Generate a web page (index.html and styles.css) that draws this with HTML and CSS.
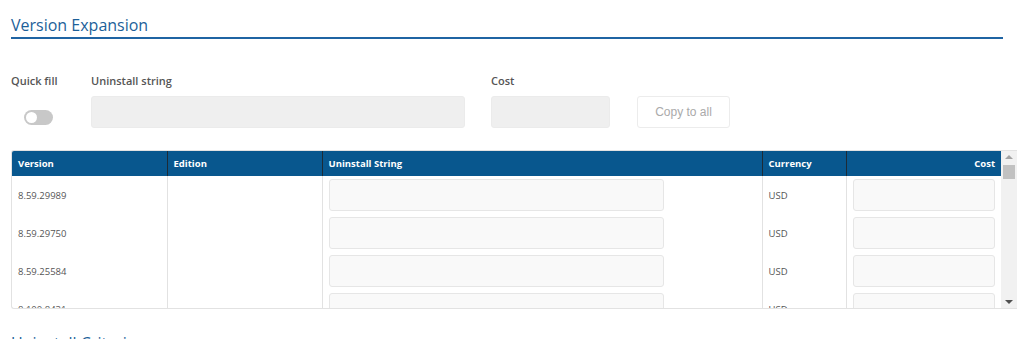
FILE: index.html
```html
<!DOCTYPE html>
<html lang="en">
<head>
  <meta charset="UTF-8">
  <meta name="viewport" content="width=device-width, initial-scale=1.0">
  <title>Version Expansion</title>
  <link rel="stylesheet" href="styles.css">
</head>
<body>

  <section class="panel">
    <h2 class="section-title">Version Expansion</h2>

    <div class="quick-fill">
      <div class="field field-toggle">
        <label>Quick fill</label>
        <span class="toggle"><span class="knob"></span></span>
      </div>
      <div class="field field-string">
        <label>Uninstall string</label>
        <input type="text" class="input-grey">
      </div>
      <div class="field field-cost">
        <label>Cost</label>
        <input type="text" class="input-grey">
      </div>
      <div class="field field-btn">
        <button class="copy-btn">Copy to all</button>
      </div>
    </div>

    <div class="table-wrap">
      <div class="table-scroll">
        <table class="versions">
          <thead>
            <tr>
              <th class="col-version">Version</th>
              <th class="col-edition">Edition</th>
              <th class="col-string">Uninstall String</th>
              <th class="col-currency">Currency</th>
              <th class="col-cost">Cost</th>
            </tr>
          </thead>
          <tbody id="versionRows"></tbody>
        </table>
      </div>
      <div class="scrollbar">
        <span class="sb-arrow up"></span>
        <span class="sb-track"><span class="sb-thumb"></span></span>
        <span class="sb-arrow down"></span>
      </div>
    </div>

    <h2 class="section-title next">Uninstall Criteria</h2>
  </section>

  <script>
    // versions found for the product
    const versions = [
      '8.59.29989', '8.59.29750', '8.59.25584', '8.100.8431', '8.100.8210',
      '8.100.7903', '8.98.7512', '8.98.7460', '8.96.7234', '8.96.7101'
    ];

    const tbody = document.getElementById('versionRows');
    versions.forEach(v => {
      const tr = document.createElement('tr');
      tr.innerHTML =
        '<td>' + v + '</td><td></td>' +
        '<td><input type="text" class="cell-input string-input"></td>' +
        '<td>USD</td>' +
        '<td><input type="text" class="cell-input cost-input"></td>';
      tbody.appendChild(tr);
    });
  </script>

</body>
</html>
```

FILE: styles.css
```css
body {
  margin: 0;
  font-family: "Open Sans", Arial, sans-serif;
  background: #fff;
  color: #555;
  overflow: hidden;
}
.panel {
  padding-left: 11px;
}
.section-title {
  margin: 14px 14px 0 0;
  font-size: 16px;
  font-weight: 400;
  line-height: 23px;
  color: #1c5f99;
  border-bottom: 2px solid #1f64a3;
}
.section-title.next {
  margin-top: 23px;
}
.quick-fill {
  display: flex;
  margin-top: 34px;
}
.field {
  display: flex;
  flex-direction: column;
}
.field label {
  font-size: 11px;
  font-weight: 600;
  line-height: 16px;
  color: #555;
  margin-bottom: 7px;
}
.field-toggle {
  width: 80px;
}
.toggle {
  position: relative;
  display: block;
  width: 29px;
  height: 15px;
  margin: 14px 0 0 13px;
  background: #c8c8c8;
  border-radius: 8px;
}
.knob {
  position: absolute;
  left: 2px;
  top: 2px;
  width: 11px;
  height: 11px;
  border-radius: 50%;
  background: #fff;
}
.input-grey {
  height: 32px;
  box-sizing: border-box;
  border: 1px solid #ebebeb;
  border-radius: 3px;
  background: #efefef;
}
.field-string {
  width: 400px;
}
.field-string .input-grey {
  width: 374px;
}
.field-cost {
  width: 146px;
}
.field-cost .input-grey {
  width: 119px;
}
.field-btn {
  justify-content: flex-end;
}
.copy-btn {
  width: 93px;
  height: 32px;
  font-family: "Liberation Sans", Arial, sans-serif;
  font-size: 12px;
  color: #aaa;
  background: #fff;
  border: 1px solid #ececec;
  border-radius: 3px;
}

/* table with its scrollbar */
.table-wrap {
  display: flex;
  margin-top: 22px;
  width: 1006px;
  height: 159px;
  box-sizing: border-box;
  border: 1px solid #e2e2e2;
  border-right: none;
  border-radius: 3px 0 0 3px;
  overflow: hidden;
}
.table-scroll {
  width: 989px;
  overflow: hidden;
}
.scrollbar {
  display: flex;
  flex-direction: column;
  width: 16px;
  background: #f1f1f1;
}
.sb-arrow {
  position: relative;
  height: 13px;
}
.sb-arrow::after {
  content: "";
  position: absolute;
  left: 4px;
  border-left: 4px solid transparent;
  border-right: 4px solid transparent;
}
.sb-arrow.up::after {
  top: 4px;
  border-bottom: 4px solid #a3a3a3;
}
.sb-arrow.down::after {
  top: 5px;
  border-top: 4px solid #505050;
}
.sb-track {
  flex: 1;
  padding: 1px 2px 0;
}
.sb-thumb {
  display: block;
  height: 14px;
  background: #c1c1c1;
}

.versions {
  width: 989px;
  border-collapse: collapse;
  table-layout: fixed;
  font-size: 9.5px;
}
.versions th {
  box-sizing: border-box;
  height: 25px;
  padding: 0 6px;
  background: #08578e;
  color: #fff;
  font-weight: 700;
  text-align: left;
  border-left: 1px solid #1d2b36;
}
.versions th:first-child {
  border-left: none;
}
.versions th.col-cost {
  text-align: right;
}
.col-version { width: 155px; }
.col-edition { width: 155px; }
.col-string { width: 440px; }
.col-currency { width: 84px; }
.versions td {
  height: 38px;
  box-sizing: border-box;
  padding: 0 6px;
  color: #555;
  border-left: 1px solid #e2e2e2;
}
.versions td:first-child {
  border-left: none;
}
.cell-input {
  display: block;
  height: 32px;
  box-sizing: border-box;
  border: 1px solid #e6e6e6;
  border-radius: 3px;
  background: #f9f9f9;
}
.string-input {
  width: 335px;
}
.cost-input {
  width: 100%;
}
```
